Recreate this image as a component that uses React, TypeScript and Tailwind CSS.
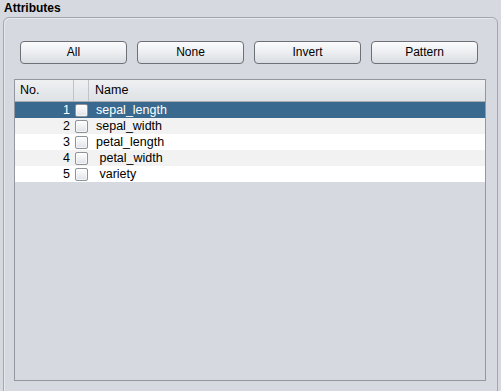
const buttons = ["All", "None", "Invert", "Pattern"];

const rows = [
  { no: 1, name: "sepal_length" },
  { no: 2, name: "sepal_width" },
  { no: 3, name: "petal_length" },
  { no: 4, name: " petal_width" },
  { no: 5, name: " variety" },
];

function CheckBox() {
  return (
    <div className="w-[13px] h-[13px] rounded-[2px] border border-[#8e9299] bg-gradient-to-b from-[#ffffff] to-[#dfe2e7] shadow-[inset_0_0_0_1px_rgba(255,255,255,0.6)]" />
  );
}

export default function App() {
  return (
    <div className="w-[501px] h-[391px] overflow-hidden bg-[#d6d9df] text-[12px] text-black font-['Liberation_Sans',Arial,sans-serif]">
      <div className="h-[17px] pl-[4px] pt-[1px] font-bold leading-[15px]">Attributes</div>

      {/* group box */}
      <div className="ml-[3px] w-[495px] h-[380px] rounded-t-[6px] border border-[#a3a7ae] shadow-[inset_1px_1px_0_#e6e8ec]">
        <div className="flex gap-[10px] pl-[16px] pt-[23px]">
          {buttons.map((b) => (
            <button
              key={b}
              className="w-[107px] h-[23px] rounded-[4px] border border-[#6d7077] bg-gradient-to-b from-[#fbfbfc] via-[#eceef1] to-[#d9dce1] text-[12px] leading-[21px] text-center"
            >
              {b}
            </button>
          ))}
        </div>

        {/* table */}
        <div className="mt-[15px] ml-[10px] w-[472px] h-[302px] border border-[#9397a0] bg-[#d6d9df]">
          <div className="flex h-[22px] border-b border-[#a9adb4] bg-gradient-to-b from-[#eef0f2] to-[#dfe2e6] leading-[21px] text-[12.5px]">
            <div className="w-[59px] pl-[5px] border-r border-[#c0c4ca]">No.</div>
            <div className="w-[15px] border-r border-[#c0c4ca]" />
            <div className="pl-[6px]">Name</div>
          </div>
          {rows.map((r, i) => {
            const selected = i === 0;
            const bg = selected ? "bg-[#39698e] text-white" : i % 2 === 1 ? "bg-[#f2f2f2]" : "bg-white";
            return (
              <div key={r.no} className={`flex items-center h-[16px] leading-[16px] text-[12.5px] ${bg}`}>
                <div className="w-[59px] pr-[4px] text-right">{r.no}</div>
                <div className="w-[15px] flex justify-center">
                  <CheckBox />
                </div>
                <div className="pl-[7px] whitespace-pre">{r.name}</div>
              </div>
            );
          })}
        </div>
      </div>
    </div>
  );
}
